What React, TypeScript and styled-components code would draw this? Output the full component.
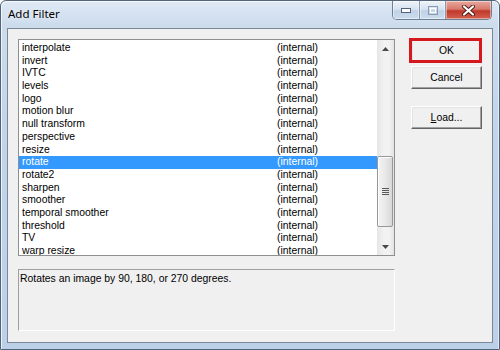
import React from 'react';
import styled, { createGlobalStyle } from 'styled-components';

const Global = createGlobalStyle`
  html, body { margin: 0; padding: 0; width: 500px; height: 350px; overflow: hidden; background: #ffffff; }
  #root { width: 500px; height: 350px; }
  * { box-sizing: border-box; }
`;

const Window = styled.div`
  width: 500px;
  height: 350px;
  display: flex;
  flex-direction: column;
  border: 1px solid #52647a;
  border-radius: 6px 6px 0 0;
  padding: 0 6px 6px 6px;
  background: linear-gradient(to bottom, #dfe9f5 0px, #cddced 24px, #c2d5eb 120px, #bcd0e8 100%);
  box-shadow: inset 1px 1px 0 rgba(255,255,255,0.7), inset -1px 0 0 rgba(255,255,255,0.5);
`;

const TitleBar = styled.div`
  height: 27px;
  display: flex;
  align-items: flex-start;
`;

const Title = styled.div`
  font-family: "Noto Sans", "Open Sans", sans-serif;
  font-size: 11.5px;
  color: #000;
  padding: 5px 0 0 1px;
  line-height: 16px;
  text-shadow: 0 0 6px rgba(255,255,255,0.9);
`;

const CaptionGroup = styled.div`
  margin-left: auto;
  margin-right: 1px;
  display: flex;
  height: 19px;
  border: 1px solid #6f7f94;
  border-top: none;
  border-radius: 0 0 5px 5px;
  overflow: hidden;
`;

const CaptionButton = styled.div<{ $w: number; $close?: boolean }>`
  width: ${p => p.$w}px;
  height: 100%;
  display: flex;
  align-items: center;
  justify-content: center;
  & + & { border-left: 1px solid #8797ab; }
  background: ${p =>
    p.$close
      ? 'linear-gradient(to bottom, #e8a99f 0%, #d87a6c 45%, #c0392b 55%, #d4614f 100%)'
      : 'linear-gradient(to bottom, #eef3f9 0%, #d7e3f1 45%, #c1d2e6 55%, #cbdcef 100%)'};
  box-shadow: inset 0 0 0 1px rgba(255,255,255,0.45);
`;

const Client = styled.div`
  flex: 1;
  display: flex;
  gap: 16px;
  padding: 10px 0 0 10px;
  background: #f0f0f0;
  border: 1px solid #7a8797;
  font-family: "Liberation Sans", Arial, sans-serif;
  font-size: 10.4px;
  color: #000;
`;

const LeftColumn = styled.div`
  width: 377px;
  display: flex;
  flex-direction: column;
  gap: 13px;
`;

const ListBox = styled.div`
  height: 217px;
  display: flex;
  background: #ffffff;
  border: 1px solid #8e8f8f;
`;

const Rows = styled.div`
  flex: 1;
  overflow: hidden;
  padding-top: 2px;
`;

const Row = styled.div<{ $selected?: boolean }>`
  height: 12.7px;
  line-height: 12.7px;
  display: grid;
  grid-template-columns: 255px 1fr;
  padding-left: 3px;
  white-space: nowrap;
  background: ${p => (p.$selected ? '#3399ff' : 'transparent')};
  color: ${p => (p.$selected ? '#ffffff' : '#000000')};
`;

const ScrollBar = styled.div`
  width: 17px;
  display: flex;
  flex-direction: column;
  background: linear-gradient(to right, #e6e6e6, #f2f2f2 40%, #f2f2f2 70%, #e3e3e3);
`;

const ArrowButton = styled.div`
  height: 17px;
  display: flex;
  align-items: center;
  justify-content: center;
`;

const Track = styled.div`
  flex: 1;
  display: flex;
  flex-direction: column;
  padding: 0 1px 0 0;
`;

const Thumb = styled.div`
  border: 1px solid #979797;
  border-radius: 2px;
  background: linear-gradient(to right, #f4f4f4 0%, #e9e9e9 50%, #d8d8d8 100%);
  box-shadow: inset 1px 1px 0 #ffffff;
  display: flex;
  align-items: center;
  justify-content: center;
`;

const DescBox = styled.div`
  height: 62px;
  border-top: 1px solid #a0a0a0;
  border-left: 1px solid #a0a0a0;
  border-right: 1px solid #ffffff;
  border-bottom: 1px solid #ffffff;
  padding: 2px 1px;
  line-height: 13px;
`;

const ButtonColumn = styled.div`
  width: 71px;
  display: flex;
  flex-direction: column;
`;

const Button = styled.div<{ $gapBefore?: number }>`
  position: relative;
  height: 23px;
  margin-top: ${p => p.$gapBefore ?? 0}px;
  display: flex;
  align-items: center;
  justify-content: center;
  background: #f0f0f0;
  border: 1px solid;
  border-color: #ffffff #646464 #646464 #ffffff;
  box-shadow: inset -1px -1px 0 #a0a0a0, inset 1px 1px 0 #e3e3e3;
`;

const Annotation = styled.span`
  position: absolute;
  top: -2px;
  bottom: -2px;
  left: -3px;
  right: -1px;
  border: 3px solid #d4181d;
  pointer-events: none;
`;

const filters = [
  'interpolate', 'invert', 'IVTC', 'levels', 'logo', 'motion blur', 'null transform',
  'perspective', 'resize', 'rotate', 'rotate2', 'sharpen', 'smoother', 'temporal smoother',
  'threshold', 'TV', 'warp resize',
];

const Triangle = ({ up }: { up: boolean }) => (
  <svg width="7" height="4" viewBox="0 0 7 4">
    <polygon points={up ? '3.5,0 7,4 0,4' : '0,0 7,0 3.5,4'} fill="#4a4a4a" />
  </svg>
);

export default function App() {
  return (
    <>
      <Global />
      <Window>
        <TitleBar>
          <Title>Add Filter</Title>
          <CaptionGroup>
            <CaptionButton $w={26}>
              <svg width="10" height="5" viewBox="0 0 10 5">
                <rect x="0.5" y="0.5" width="9" height="4" fill="#ffffff" stroke="#51637a" />
              </svg>
            </CaptionButton>
            <CaptionButton $w={26}>
              <svg width="10" height="9" viewBox="0 0 10 9">
                <rect x="0.5" y="0.5" width="9" height="8" fill="none" stroke="#8a9ab0" />
                <rect x="2.5" y="2.5" width="5" height="4" fill="none" stroke="#ffffff" />
              </svg>
            </CaptionButton>
            <CaptionButton $w={46} $close>
              <svg width="13" height="11" viewBox="0 0 13 11">
                <path d="M2 1.5 L11 9.5 M11 1.5 L2 9.5" stroke="#4d1b16" strokeWidth="4" strokeLinecap="round" />
                <path d="M2 1.5 L11 9.5 M11 1.5 L2 9.5" stroke="#ffffff" strokeWidth="2.2" strokeLinecap="round" />
              </svg>
            </CaptionButton>
          </CaptionGroup>
        </TitleBar>
        <Client>
          <LeftColumn>
            <ListBox>
              <Rows>
                {filters.map(f => (
                  <Row key={f} $selected={f === 'rotate'}>
                    <span>{f}</span>
                    <span>(internal)</span>
                  </Row>
                ))}
              </Rows>
              <ScrollBar>
                <ArrowButton><Triangle up /></ArrowButton>
                <Track>
                  <Thumb style={{ marginTop: 99, height: 71 }}>
                    <svg width="7" height="8" viewBox="0 0 7 8">
                      {[0, 2, 4, 6].map(y => (
                        <rect key={y} x="0" y={y} width="7" height="1" fill="#5a5a5a" />
                      ))}
                    </svg>
                  </Thumb>
                </Track>
                <ArrowButton><Triangle up={false} /></ArrowButton>
              </ScrollBar>
            </ListBox>
            <DescBox>Rotates an image by 90, 180, or 270 degrees.</DescBox>
          </LeftColumn>
          <ButtonColumn>
            <Button>
              OK
              <Annotation />
            </Button>
            <Button $gapBefore={4}>Cancel</Button>
            <Button $gapBefore={17}><span><u>L</u>oad...</span></Button>
          </ButtonColumn>
        </Client>
      </Window>
    </>
  );
}
